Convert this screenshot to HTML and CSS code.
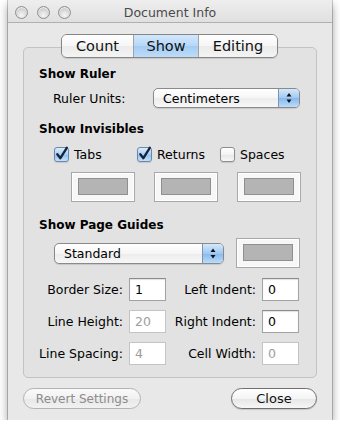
FILE: index.html
```html
<!DOCTYPE html>
<html>
<head>
<meta charset="utf-8">
<link rel="stylesheet" href="styles.css">
</head>
<body>
<div class="window">
  <div class="titlebar">
    <div class="lights"><span class="light"></span><span class="light"></span><span class="light"></span></div>
    <div class="title">Document Info</div>
    <div></div>
  </div>
  <div class="tabs-wrap">
    <div class="tabs">
      <div class="tab t-count">Count</div>
      <div class="tab t-show sel">Show</div>
      <div class="tab t-edit">Editing</div>
    </div>
  </div>
  <div class="group">
    <div class="h">Show Ruler</div>
    <div class="ruler-row">
      <span class="ruler-label">Ruler Units:</span>
      <div class="popup popup-units">
        <span class="popup-text">Centimeters</span>
        <span class="stepper"><svg width="20" height="18" viewBox="0 0 20 18"><path d="M7.5 7.5 L10 4 L12.5 7.5 Z M7.5 10.5 L10 14 L12.5 10.5 Z" fill="#111"/></svg></span>
      </div>
    </div>
    <div class="h h2">Show Invisibles</div>
    <div class="inv">
      <label class="check"><span class="cb on"><svg width="15" height="15" viewBox="0 0 15 15"><path d="M3.3 7.2 L6.4 11.2 L12.8 0.8" fill="none" stroke="#15233d" stroke-width="2.3" stroke-linecap="round" stroke-linejoin="round"/></svg></span>Tabs</label>
      <label class="check"><span class="cb on"><svg width="15" height="15" viewBox="0 0 15 15"><path d="M3.3 7.2 L6.4 11.2 L12.8 0.8" fill="none" stroke="#15233d" stroke-width="2.3" stroke-linecap="round" stroke-linejoin="round"/></svg></span>Returns</label>
      <label class="check"><span class="cb"></span>Spaces</label>
      <div class="well well-off"><span class="swatch"></span></div>
      <div class="well well-off"><span class="swatch"></span></div>
      <div class="well well-off"><span class="swatch"></span></div>
    </div>
    <div class="h h3">Show Page Guides</div>
    <div class="guides-row">
      <div class="popup popup-guides">
        <span class="popup-text">Standard</span>
        <span class="stepper"><svg width="20" height="19" viewBox="0 0 20 19"><path d="M7.5 8 L10 4.5 L12.5 8 Z M7.5 11 L10 14.5 L12.5 11 Z" fill="#111"/></svg></span>
      </div>
      <div class="well"><span class="swatch"></span></div>
    </div>
    <div class="fields">
      <span class="lbl">Border Size:</span><span class="field">1</span>
      <span class="lbl">Left Indent:</span><span class="field">0</span>
      <span class="lbl">Line Height:</span><span class="field dis">20</span>
      <span class="lbl">Right Indent:</span><span class="field">0</span>
      <span class="lbl">Line Spacing:</span><span class="field dis">4</span>
      <span class="lbl">Cell Width:</span><span class="field dis">0</span>
    </div>
  </div>
  <div class="buttons">
    <div class="btn btn-revert">Revert Settings</div>
    <div class="btn btn-close">Close</div>
  </div>
</div>
</body>
</html>
```
FILE: styles.css
```css
* { box-sizing: border-box; }
html, body { margin: 0; padding: 0; background: #fff; }
body {
  font-family: "DejaVu Sans", "Liberation Sans", sans-serif;
  font-size: 12.5px;
  color: #000;
}
.window {
  width: 324px;
  height: 420px;
  margin-left: 8px;
  background: #e8e8e8;
  box-shadow: 0 0 0 1px rgba(0,0,0,0.2), 0 5px 9px rgba(0,0,0,0.4);
  display: flex;
  flex-direction: column;
}
.titlebar {
  height: 23px;
  padding-top: 3px;
  border-bottom: 1px solid #b0b0b0;
  background: linear-gradient(#eeeeee, #e0e0e0);
  display: grid;
  grid-template-columns: 1fr auto 1fr;
  align-items: center;
}
.lights { display: flex; gap: 8.5px; padding-left: 7px; }
.light {
  width: 13px; height: 13px; border-radius: 50%;
  border: 1px solid #8e8e8e;
  background: radial-gradient(circle at 50% 75%, #f6f6f6 0%, #d6d6d6 55%, #b5b5b5 100%);
  box-shadow: inset 0 1px 1px rgba(255,255,255,0.8);
}
.title { color: #4a4a4a; font-size: 12.5px; }

.tabs-wrap {
  display: flex;
  justify-content: center;
  margin-top: 11px;
  margin-bottom: -11px;
  padding-right: 1px;
  position: relative;
  z-index: 1;
}
.tabs {
  display: flex;
  height: 24px;
  border: 1px solid #858585;
  border-radius: 6px;
  overflow: hidden;
  box-shadow: 0 1px 1px rgba(0,0,0,0.12);
}
.tab {
  display: flex; align-items: center; justify-content: center;
  font-size: 14.5px;
  color: #111;
  background: linear-gradient(#fefefe, #f6f6f6 50%, #ebebeb 51%, #f4f4f4);
}
.tab + .tab { border-left: 1px solid #a3a3a3; }
.t-count { width: 71px; }
.t-show { width: 65px; }
.t-edit { width: 79px; }
.tab.sel { background: linear-gradient(#d3e7fb, #b6d7f7 50%, #a3ccf4 51%, #bddcf8); }

.group {
  margin: 0 15px;
  border: 1px solid #c3c3c3;
  border-radius: 5px;
  background: #e2e2e2;
  padding: 18px 0 12px;
}
.h {
  font-weight: bold;
  font-size: 12px;
  height: 16px;
  line-height: 16px;
  padding-left: 15px;
}
.h2 { margin-top: 13px; }
.h3 { margin-top: 15px; }

.ruler-row {
  display: flex;
  align-items: center;
  height: 20px;
  margin-top: 6px;
  padding-left: 29px;
}
.ruler-label { width: 100px; }

.popup {
  display: flex;
  align-items: center;
  border: 1px solid #8a8a8a;
  border-radius: 5px;
  background: linear-gradient(#ffffff, #f6f6f6 50%, #ececec 51%, #f7f7f7);
  box-shadow: 0 1px 1px rgba(0,0,0,0.12);
  overflow: hidden;
}
.popup-units { width: 147px; height: 20px; }
.popup-guides { width: 170px; height: 21px; }
.popup-text { flex: 1; padding-left: 9px; }
.stepper {
  width: 21px; height: 100%;
  display: flex; align-items: center; justify-content: center;
  border-left: 1px solid #7e93ae;
  background: linear-gradient(#d4e8fb, #9fc8f1 50%, #85b8ee 51%, #bcdcf9);
}

.inv {
  display: grid;
  grid-template-columns: repeat(3, 83px);
  grid-template-rows: 16px 30px;
  row-gap: 10px;
  margin-top: 9px;
  padding-left: 30px;
}
.check { display: flex; align-items: center; gap: 5px; height: 16px; }
.cb {
  width: 15px; height: 15px;
  border: 1px solid #8d8d8d;
  border-radius: 3px;
  background: linear-gradient(#ffffff, #f3f3f3 50%, #e6e6e6 51%, #f8f8f8);
  box-shadow: 0 1px 1px rgba(0,0,0,0.12);
  display: flex;
}
.cb svg { overflow: visible; margin: -1px 0 0 -1px; }
.cb.on {
  border-color: #6b88ab;
  background: linear-gradient(#dbecfc, #a9cff4 50%, #8fc0f0 51%, #c5e1fb);
}
.well {
  width: 64px; height: 30px;
  border: 1px solid #a8a8a8;
  background: #f7f7f7;
  box-shadow: inset 0 0 0 1px #ffffff;
  padding: 5px 6px 6px;
  display: flex;
}
.well-off { margin-left: 17px; }
.swatch {
  flex: 1;
  background: #b4b4b4;
  border: 1px solid #8f8f8f;
}

.guides-row {
  display: flex;
  align-items: center;
  gap: 12px;
  height: 30px;
  margin-top: 5px;
  padding-left: 30px;
}

.fields {
  display: grid;
  grid-template-columns: 99px 37px 84px 37px;
  grid-auto-rows: 23px;
  column-gap: 6px;
  row-gap: 9px;
  margin-top: 10px;
  align-items: center;
}
.lbl { text-align: right; }
.field {
  height: 23px;
  border: 1px solid #a2a2a2;
  border-top-color: #8a8a8a;
  background: #fff;
  box-shadow: inset 0 1px 1px rgba(0,0,0,0.12);
  padding-left: 5px;
  line-height: 21px;
}
.field.dis { color: #9d9d9d; border-color: #c4c4c4; box-shadow: none; }

.buttons {
  display: flex;
  justify-content: space-between;
  margin-top: 10px;
  padding: 0 15px;
}
.btn {
  height: 21px;
  border-radius: 11px;
  display: flex; align-items: center; justify-content: center;
}
.btn-revert {
  width: 118px;
  font-size: 12px;
  color: #8c8c8c;
  border: 1px solid #b3b3b3;
  background: linear-gradient(#fafafa, #f1f1f1 50%, #e8e8e8 51%, #f1f1f1);
}
.btn-close {
  width: 86px;
  font-size: 13px;
  color: #111;
  border: 1px solid #6f6f6f;
  background: linear-gradient(#ffffff, #f4f4f4 50%, #e6e6e6 51%, #f6f6f6);
  box-shadow: 0 1px 1px rgba(0,0,0,0.15);
}
```
